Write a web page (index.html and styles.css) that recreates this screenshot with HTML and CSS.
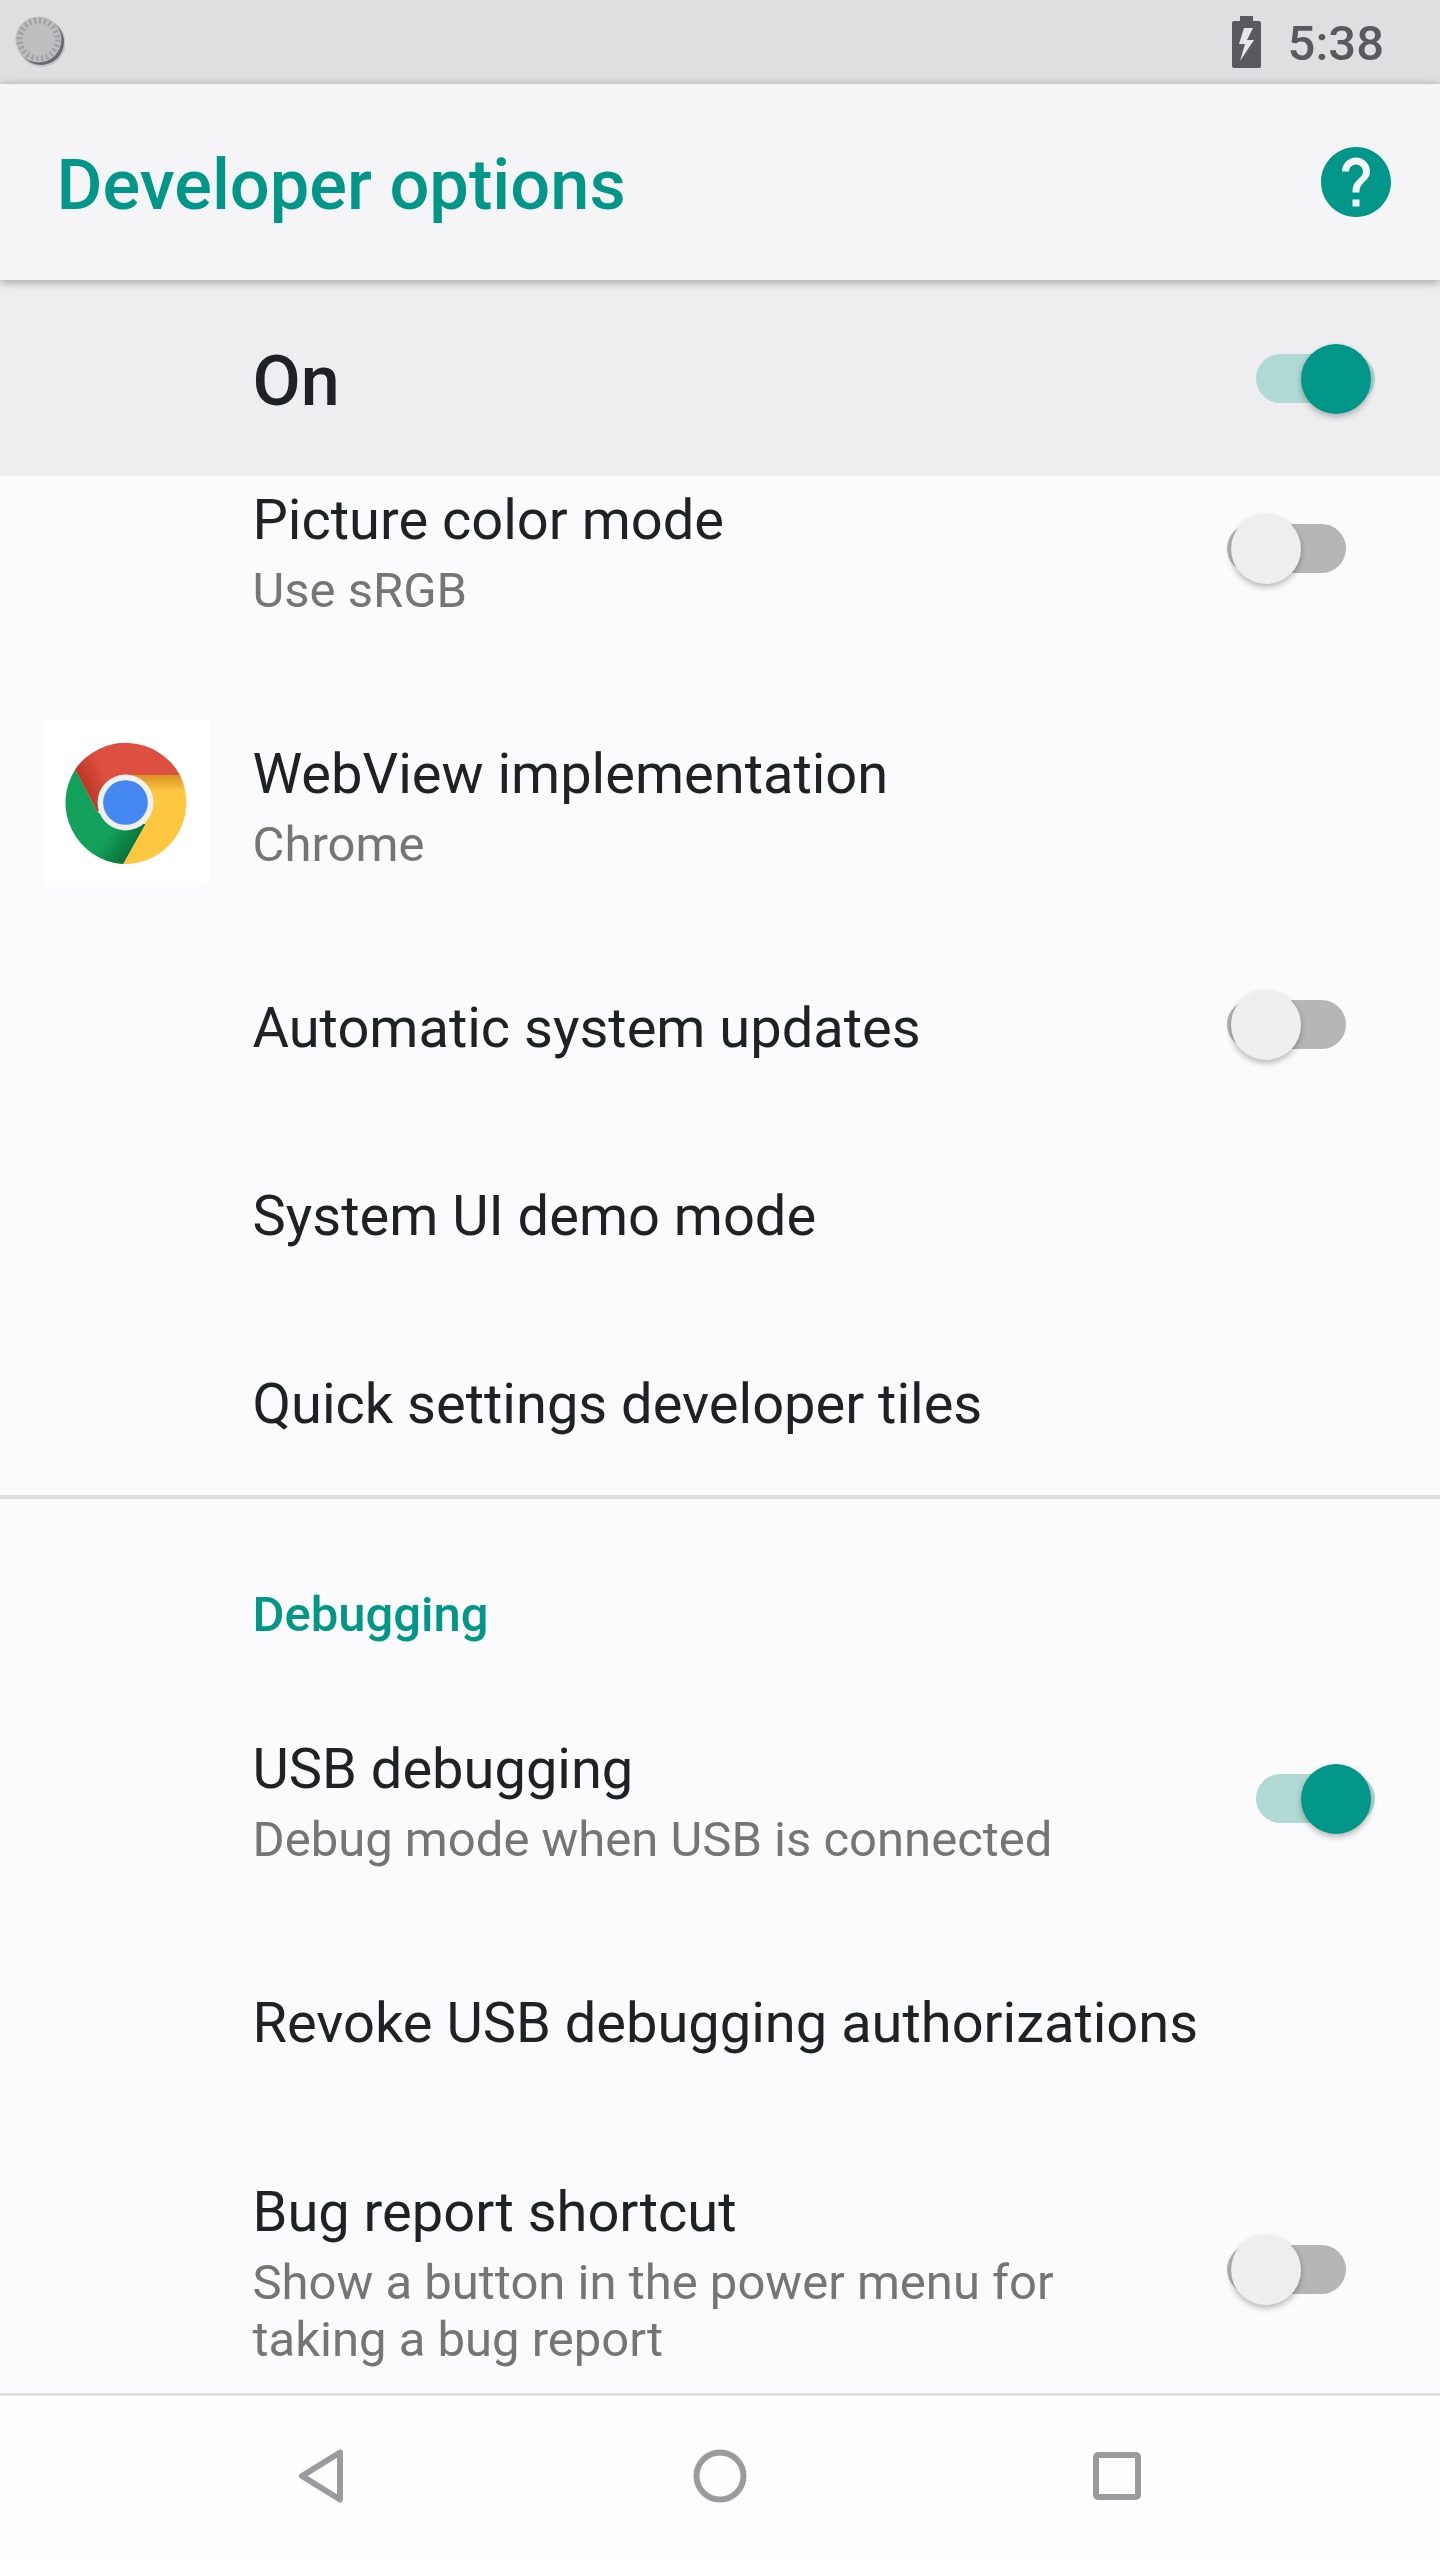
FILE: index.html
```html
<!DOCTYPE html>
<html lang="en">
<head>
  <meta charset="UTF-8">
  <title>Developer options</title>
  <link rel="stylesheet" href="styles.css">
</head>
<body>
<div class="screen">
  <div class="status-bar">
    <svg class="spinner" width="52" height="52" viewBox="0 0 52 52">
      <circle cx="28.500" cy="27" r="24" fill="#c4c3c6"/>
      <circle cx="28" cy="26" r="23" fill="#69686c"/>
      <circle cx="25.500" cy="23.500" r="23" fill="#bebdc0"/>
      <circle cx="25.500" cy="23.500" r="19" fill="none" stroke="#a2a1a5" stroke-width="6" stroke-dasharray="2.200 2.770"/>
    </svg>
    <div class="status-right">
      <svg class="battery" width="30" height="52" viewBox="0 0 30 52">
        <path d="M9 0h13v5h6a2 2 0 0 1 2 2v43a2 2 0 0 1-2 2H3a2 2 0 0 1-2-2V7a2 2 0 0 1 2-2h6z" fill="#5a595d"/>
        <path d="M13 12h9l-6 12h7L9 45l5-17H8z" fill="#e6e5e8"/>
      </svg>
      <span class="clock">5:38</span>
    </div>
  </div>

  <div class="app-bar">
    <h1 class="app-title">Developer options</h1>
    <svg class="help" width="84" height="84" viewBox="0 0 24 24">
      <path fill="#009688" d="M12 2C6.48 2 2 6.48 2 12s4.48 10 10 10 10-4.48 10-10S17.52 2 12 2zm1 17h-2v-2h2v2zm2.07-7.75l-.9.92C13.45 12.9 13 13.5 13 15h-2v-.5c0-1.1.45-2.1 1.17-2.83l1.24-1.26c.37-.36.59-.86.59-1.41 0-1.1-.9-2-2-2s-2 .9-2 2H8c0-2.21 1.79-4 4-4s4 1.79 4 4c0 .88-.36 1.68-.93 2.25z"/>
    </svg>
  </div>

  <div class="master-row">
    <span class="master-label">On</span>
    <div class="switch on"><span class="thumb"></span></div>
  </div>

  <div class="scroller">
    <div class="list">
      <div class="row two-line">
        <div class="slot"></div>
        <div class="text">
          <div class="title">Picture color mode</div>
          <div class="summary">Use sRGB</div>
        </div>
        <div class="switch"><span class="thumb"></span></div>
      </div>

      <div class="row two-line webview-row">
        <div class="slot">
          <div class="app-icon">
            <svg width="123" height="123" viewBox="0 0 121 121">
              <defs>
                <linearGradient id="redShade" x1="14" y1="38" x2="38" y2="28" gradientUnits="userSpaceOnUse">
                  <stop offset="0" stop-color="#a52714" stop-opacity=".65"/>
                  <stop offset="1" stop-color="#a52714" stop-opacity="0"/>
                </linearGradient>
                <linearGradient id="greenShade" x1="72" y1="100" x2="50" y2="84" gradientUnits="userSpaceOnUse">
                  <stop offset="0" stop-color="#055524" stop-opacity=".6"/>
                  <stop offset="1" stop-color="#055524" stop-opacity="0"/>
                </linearGradient>
                <linearGradient id="yellowShade" x1="84" y1="33" x2="84" y2="50" gradientUnits="userSpaceOnUse">
                  <stop offset="0" stop-color="#c77a17" stop-opacity=".7"/>
                  <stop offset="1" stop-color="#c77a17" stop-opacity="0"/>
                </linearGradient>
              </defs>
              <path d="M11 28A60.500 60.500 0 0 1 114 33.500L60 33.500L33 70Z" fill="#dd5040"/>
              <path d="M11 28A60.500 60.500 0 0 1 114 33.500L60 33.500L33 70Z" fill="url(#redShade)"/>
              <path d="M114 33.500A60.500 60.500 0 0 1 58 121L80 82L60 33.500Z" fill="#fdc83f"/>
              <path d="M114 33.500A60.500 60.500 0 0 1 58 121L80 82L60 33.500Z" fill="url(#yellowShade)"/>
              <path d="M58 121A60.500 60.500 0 0 1 11 28L33 70L80 82Z" fill="#12a05a"/>
              <path d="M58 121A60.500 60.500 0 0 1 11 28L33 70L80 82Z" fill="url(#greenShade)"/>
              <circle cx="60.500" cy="60.500" r="27.500" fill="#f1f1f1"/>
              <circle cx="60.500" cy="60.500" r="22" fill="#4688f1"/>
            </svg>
          </div>
        </div>
        <div class="text">
          <div class="title">WebView implementation</div>
          <div class="summary">Chrome</div>
        </div>
      </div>

      <div class="row">
        <div class="slot"></div>
        <div class="text nudged"><div class="title">Automatic system updates</div></div>
        <div class="switch"><span class="thumb"></span></div>
      </div>
      <div class="row">
        <div class="slot"></div>
        <div class="text nudged"><div class="title">System UI demo mode</div></div>
      </div>
      <div class="row last-in-group">
        <div class="slot"></div>
        <div class="text nudged"><div class="title">Quick settings developer tiles</div></div>
      </div>

      <div class="divider"></div>

      <div class="category">Debugging</div>

      <div class="row two-line usb-row">
        <div class="slot"></div>
        <div class="text">
          <div class="title">USB debugging</div>
          <div class="summary">Debug mode when USB is connected</div>
        </div>
        <div class="switch on"><span class="thumb"></span></div>
      </div>
      <div class="row">
        <div class="slot"></div>
        <div class="text"><div class="title">Revoke USB debugging authorizations</div></div>
      </div>
      <div class="row three-line">
        <div class="slot"></div>
        <div class="text">
          <div class="title">Bug report shortcut</div>
          <div class="summary">Show a button in the power menu for<br>taking a bug report</div>
        </div>
        <div class="switch"><span class="thumb"></span></div>
      </div>
    </div>
  </div>

  <div class="nav-bar">
    <svg width="60" height="60" viewBox="0 0 60 60">
      <path d="M49 6.500 L11 30 L49 53.500 Z" class="nav-icon"/>
    </svg>
    <svg width="60" height="60" viewBox="0 0 60 60">
      <circle cx="30" cy="30" r="23.500" class="nav-icon"/>
    </svg>
    <svg width="60" height="60" viewBox="0 0 60 60">
      <rect x="7" y="9" width="42" height="42" rx="2" class="nav-icon"/>
    </svg>
  </div>
</div>
</body>
</html>
```

FILE: styles.css
```css
* {
  box-sizing: border-box;
}
body {
  margin: 0;
  font-family: Roboto, "Liberation Sans", sans-serif;
  background: #fbfafc;
}
.screen {
  width: 1440px;
  height: 2560px;
  display: flex;
  flex-direction: column;
  overflow: hidden;
}
.status-bar {
  height: 84px;
  flex: none;
  display: flex;
  align-items: center;
  justify-content: space-between;
  padding: 0 56px 0 13px;
  background: #dfdee1;
}
.status-right {
  display: flex;
  align-items: center;
  gap: 27px;
}
.clock {
  padding-top: 3px;
  font-size: 49px;
  font-weight: 500;
  color: #5a595d;
}
.app-bar {
  height: 196px;
  flex: none;
  display: flex;
  align-items: center;
  justify-content: space-between;
  padding: 0 42px 0 56.500px;
  background: #f5f5f7;
  box-shadow: 0 2px 9px rgba(0, 0, 0, 0.35);
  position: relative;
  z-index: 2;
}
.app-title {
  margin: 0;
  padding-top: 5px;
  font-size: 70.400px;
  font-weight: 500;
  color: #009688;
}
.master-row {
  height: 196px;
  flex: none;
  display: flex;
  align-items: center;
  justify-content: space-between;
  padding-left: 252.500px;
  background: #eeedf0;
  position: relative;
  z-index: 1;
}
.master-label {
  padding-top: 6px;
  font-size: 70px;
  font-weight: 500;
  color: #202124;
}
.scroller {
  flex: 1;
  overflow: hidden;
}
.list {
  margin-top: -55px;
}
.row {
  height: 188px;
  display: flex;
  align-items: center;
  padding-left: 44px;
}
.row.two-line {
  height: 254px;
}
.row.webview-row {
  height: 255px;
}
.row.three-line {
  height: 304px;
}
.row.last-in-group {
  height: 189px;
}
.row.usb-row {
  margin-bottom: 5px;
}
.usb-row .switch {
  margin-top: 3px;
}
.slot {
  width: 208.500px;
  flex: none;
}
.text {
  flex: 1;
}
.text.nudged {
  padding-top: 7px;
}
.title {
  font-size: 56px;
  line-height: 84px;
  color: #202124;
}
.summary {
  font-size: 49px;
  line-height: 57px;
  color: #757575;
}
.app-icon {
  width: 166px;
  height: 168px;
  display: flex;
  align-items: center;
  justify-content: center;
  padding-right: 3px;
  background: #fff;
  border-radius: 6px;
}
.switch {
  width: 119px;
  height: 49px;
  flex: none;
  margin-right: 94px;
  border-radius: 25px;
  background: #b6b5b8;
  position: relative;
}
.switch.on {
  margin-right: 65px;
  background: #b1d9d4;
}
.thumb {
  position: absolute;
  left: 4px;
  top: -10px;
  width: 70px;
  height: 70px;
  border-radius: 50%;
  background: #eeedf0;
  box-shadow: 0 3px 6px rgba(0, 0, 0, 0.28);
}
.switch.on .thumb {
  left: 45px;
  background: #009688;
}
.divider {
  height: 4px;
  background: #dfdee1;
}
.category {
  height: 171px;
  padding: 86.500px 0 0 252.500px;
  font-size: 49px;
  line-height: 57px;
  font-weight: 500;
  color: #009688;
}
.nav-bar {
  height: 167px;
  flex: none;
  display: flex;
  align-items: center;
  justify-content: space-between;
  padding: 0 291px 5px 291px;
  background: #fefefe;
  border-top: 3px solid #dfdee1;
}
.nav-icon {
  fill: none;
  stroke: #9b9a9e;
  stroke-width: 6;
  stroke-linejoin: round;
}
```
